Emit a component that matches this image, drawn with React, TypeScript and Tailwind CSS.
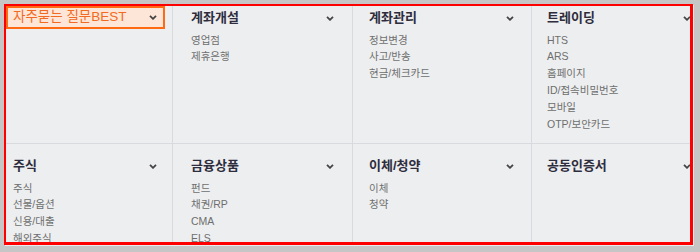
import React from "react";

const Chevron = () => (
  <svg width="8" height="5" viewBox="0 0 8 5" className="shrink-0">
    <path d="M1 0.8 L4 3.8 L7 0.8" fill="none" stroke="#444" strokeWidth="1.8" />
  </svg>
);

type Col = { title: string; items: string[] };

const row1: Col[] = [
  { title: "계좌개설", items: ["영업점", "제휴은행"] },
  { title: "계좌관리", items: ["정보변경", "사고/반송", "현금/체크카드"] },
  { title: "트레이딩", items: ["HTS", "ARS", "홈페이지", "ID/접속비밀번호", "모바일", "OTP/보안카드"] },
];

const row2: Col[] = [
  { title: "주식", items: ["주식", "선물/옵션", "신용/대출", "해외주식"] },
  { title: "금융상품", items: ["펀드", "채권/RP", "CMA", "ELS"] },
  { title: "이체/청약", items: ["이체", "청약"] },
  { title: "공동인증서", items: [] },
];

const pads = [
  "pl-[7px] pr-[15px]",
  "pl-[18px] pr-[18px] border-l border-[#d9dadd]",
  "pl-[16px] pr-[17px] border-l border-[#d9dadd]",
  "pl-[15px] pr-[20px] border-l border-[#d9dadd]",
];

const Cell = ({ col, cls }: { col: Col; cls: string }) => (
  <div className={cls}>
    <div className="flex items-center justify-between h-[20px] text-[13px] leading-[20px] font-bold text-[#2e2d3d]">
      <span>{col.title}</span>
      <Chevron />
    </div>
    <ul className="mt-[3.6px] text-[10.5px] leading-[16.8px] text-[#6e6e6e]">
      {col.items.map((it) => (
        <li key={it} className="whitespace-nowrap">{it}</li>
      ))}
    </ul>
  </div>
);

export default function App() {
  return (
    <div
      className="w-[700px] h-[252px] bg-[#c6c6c6] pt-[4px] pl-[4px] pr-[7px] pb-[7px]"
      style={{ fontFamily: '"Liberation Sans", "Noto Sans CJK KR", sans-serif' }}
    >
      <div className="h-full border-2 border-r-[3px] border-b-[3px] border-[#ff0000] bg-[#edeef0] overflow-hidden shadow-[1px_1px_0_#ececec]">
        <div className="grid grid-cols-[166px_180px_179px_180px] grid-rows-[137px_150px]">
          <div className="pt-0">
            <div className="flex items-center justify-between w-[159px] h-[23px] border-2 border-[#ff6a13] bg-[#fde6d8] pl-[5px] pr-[6px] text-[13.5px] text-[#f26a21]">
              <span>자주묻는 질문BEST</span>
              <Chevron />
            </div>
          </div>
          {row1.map((c, i) => (
            <Cell key={c.title} col={c} cls={`pt-[2px] ${pads[i + 1]}`} />
          ))}
          {row2.map((c, i) => (
            <Cell key={c.title} col={c} cls={`pt-[12px] border-t border-t-[#d9dadd] ${pads[i]}`} />
          ))}
        </div>
      </div>
    </div>
  );
}
